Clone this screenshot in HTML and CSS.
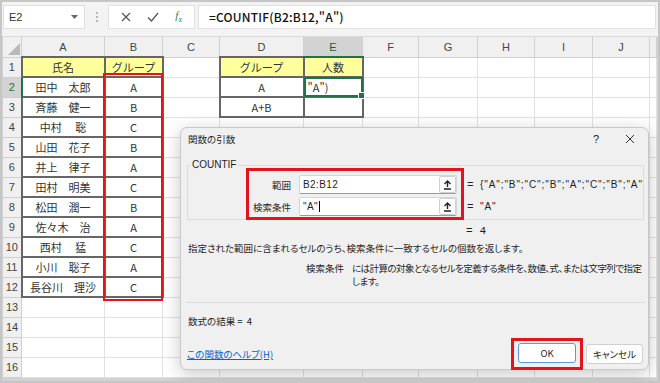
FILE: index.html
```html
<!DOCTYPE html>
<html lang="ja">
<head>
    <meta charset="UTF-8">
    <meta name="viewport" content="width=device-width, initial-scale=1.0">
    <title>COUNTIF 関数の引数</title>
    <link rel="stylesheet" href="styles.css">
</head>
<body>
<div class="window">
    <div class="formula-bar">
        <div class="name-box">
            <span>E2</span>
            <svg class="caret" width="7" height="4" viewBox="0 0 7 4"><path d="M0 0h7L3.5 4z" fill="#666"/></svg>
        </div>
        <div class="grip"><i></i><i></i><i></i></div>
        <div class="fx-box">
            <svg width="10" height="10" viewBox="0 0 10 10"><path d="M1 1l8 8M9 1l-8 8" stroke="#555" stroke-width="1.2"/></svg>
            <svg width="12" height="10" viewBox="0 0 12 10"><path d="M1 5.5l3.5 3.5L11 1" stroke="#555" stroke-width="1.3" fill="none"/></svg>
            <span class="fx">f<sub>x</sub></span>
        </div>
        <div class="formula-input">=COUNTIF(B2:B12,"A")</div>
    </div>

    <table class="sheet">
        <colgroup>
            <col class="c-rh"><col class="c-a"><col class="c-b"><col class="c-c"><col class="c-d"><col class="c-e">
            <col class="c-f"><col class="c-g"><col class="c-h"><col class="c-i"><col class="c-j"><col class="c-k">
        </colgroup>
        <thead>
            <tr>
                <th class="corner"><svg width="12" height="12" viewBox="0 0 12 12"><path d="M12 0v12H0z" fill="#b9b9b9"/></svg></th>
                <th>A</th><th>B</th><th>C</th><th>D</th><th class="active">E</th><th>F</th><th>G</th><th>H</th><th>I</th><th>J</th><th></th>
            </tr>
        </thead>
        <tbody>
            <tr><th>1</th><td class="t hd">氏名</td><td class="t hd">グループ</td><td></td><td class="t hd">グループ</td><td class="t hd">人数</td><td></td><td></td><td></td><td></td><td></td><td></td></tr>
            <tr><th class="active">2</th><td class="t">田中　太郎</td><td class="t">A</td><td></td><td class="t">A</td><td class="t sel">"A")</td><td></td><td></td><td></td><td></td><td></td><td></td></tr>
            <tr><th>3</th><td class="t">斉藤　健一</td><td class="t">B</td><td></td><td class="t">A+B</td><td class="t"></td><td></td><td></td><td></td><td></td><td></td><td></td></tr>
            <tr><th>4</th><td class="t">中村　 聡</td><td class="t">C</td><td></td><td></td><td></td><td></td><td></td><td></td><td></td><td></td><td></td></tr>
            <tr><th>5</th><td class="t">山田　花子</td><td class="t">B</td><td></td><td></td><td></td><td></td><td></td><td></td><td></td><td></td><td></td></tr>
            <tr><th>6</th><td class="t">井上　律子</td><td class="t">A</td><td></td><td></td><td></td><td></td><td></td><td></td><td></td><td></td><td></td></tr>
            <tr><th>7</th><td class="t">田村　明美</td><td class="t">C</td><td></td><td></td><td></td><td></td><td></td><td></td><td></td><td></td><td></td></tr>
            <tr><th>8</th><td class="t">松田　潤一</td><td class="t">B</td><td></td><td></td><td></td><td></td><td></td><td></td><td></td><td></td><td></td></tr>
            <tr><th>9</th><td class="t">佐々木　治</td><td class="t">A</td><td></td><td></td><td></td><td></td><td></td><td></td><td></td><td></td><td></td></tr>
            <tr><th>10</th><td class="t">西村　 猛</td><td class="t">C</td><td></td><td></td><td></td><td></td><td></td><td></td><td></td><td></td><td></td></tr>
            <tr><th>11</th><td class="t">小川　聡子</td><td class="t">A</td><td></td><td></td><td></td><td></td><td></td><td></td><td></td><td></td><td></td></tr>
            <tr><th>12</th><td class="t">長谷川　理沙</td><td class="t">C</td><td></td><td></td><td></td><td></td><td></td><td></td><td></td><td></td><td></td></tr>
            <tr><th>13</th><td></td><td></td><td></td><td></td><td></td><td></td><td></td><td></td><td></td><td></td><td></td></tr>
            <tr><th>14</th><td></td><td></td><td></td><td></td><td></td><td></td><td></td><td></td><td></td><td></td><td></td></tr>
            <tr><th>15</th><td></td><td></td><td></td><td></td><td></td><td></td><td></td><td></td><td></td><td></td><td></td></tr>
            <tr><th>16</th><td></td><td></td><td></td><td></td><td></td><td></td><td></td><td></td><td></td><td></td><td></td></tr>
        </tbody>
    </table>

    <!-- 範囲 B2:B12 の赤枠 -->
    <div class="mark"></div>

    <div class="dialog">
        <div class="dlg-title">
            <span>関数の引数</span>
            <span class="help">?</span>
            <svg class="close" width="10" height="10" viewBox="0 0 10 10"><path d="M1 1l8 8M9 1l-8 8" stroke="#333" stroke-width="1"/></svg>
        </div>

        <fieldset class="group">
            <legend>COUNTIF</legend>
            <div class="args">
                <div class="arg-box">
                    <label>範囲</label>
                    <div class="ref-input"><span>B2:B12</span><button class="ref-btn"><svg width="9" height="10" viewBox="0 0 9 10"><path d="M4.5 1v6M1.5 4l3-3 3 3M1 9h7" stroke="#222" stroke-width="1.4" fill="none"/></svg></button></div>
                    <label>検索条件</label>
                    <div class="ref-input"><span>"A"<b class="cursor"></b></span><button class="ref-btn"><svg width="9" height="10" viewBox="0 0 9 10"><path d="M4.5 1v6M1.5 4l3-3 3 3M1 9h7" stroke="#222" stroke-width="1.4" fill="none"/></svg></button></div>
                </div>
                <div class="vals">
                    <span class="eq">=</span><span class="val">{"A";"B";"C";"B";"A";"C";"B";"A";"C";"A";"C"}</span>
                    <span class="eq">=</span><span class="val">"A"</span>
                </div>
            </div>
        </fieldset>

        <div class="total"><span class="eq">=</span><span>4</span></div>
        <p class="desc">指定された範囲に含まれるセルのうち、検索条件に一致するセルの個数を返します。</p>
        <div class="arg-desc">
            <span class="arg-name">検索条件</span>
            <p>には計算の対象となるセルを定義する条件を、数値、式、または文字列で指定<br>します。</p>
        </div>

        <hr class="sep">
        <div class="result">数式の結果 =&nbsp;&nbsp;4</div>

        <div class="dlg-foot">
            <a href="#" class="help-link">この関数のヘルプ(H)</a>
            <span class="ok-mark"><button class="btn ok">OK</button></span>
            <button class="btn">キャンセル</button>
        </div>
    </div>
</div>
</body>
</html>
```

FILE: styles.css
```css
* {
    box-sizing: border-box;
    margin: 0;
    padding: 0;
}

body {
    background-color: #fff;
    font-family: "Noto Sans CJK JP", sans-serif;
    color: #222;
}

.window {
    position: relative;
    width: 660px;
    height: 383px;
    border: 2px solid #c6c6c6;
    background-color: #d2d2d2;
    overflow: hidden;
}

/* formula bar */

.formula-bar {
    display: flex;
    align-items: flex-start;
    height: 35px;
    padding: 3px 2px 0 1px;
    background-color: #f3f3f3;
    border-bottom: 1px solid #dadada;
}

.name-box {
    display: flex;
    align-items: center;
    justify-content: space-between;
    width: 82px;
    height: 24px;
    padding: 0 6px 0 5px;
    background-color: #fff;
    border: 1px solid #dedede;
    font-family: "Liberation Sans", sans-serif;
    font-size: 11px;
    color: #333;
}

.grip {
    display: flex;
    flex-direction: column;
    gap: 2px;
    width: 23px;
    padding-top: 7px;
    align-items: center;
}

.grip i {
    width: 2px;
    height: 2px;
    background-color: #b8b8b8;
}

.fx-box {
    display: flex;
    align-items: center;
    justify-content: space-around;
    width: 87px;
    height: 24px;
    padding: 0 4px;
    background-color: #fff;
    border: 1px solid #e2e2e2;
}

.fx {
    font-family: "Liberation Serif", serif;
    font-style: italic;
    font-size: 11px;
    color: #2d7d46;
}

.fx sub {
    font-size: 8px;
}

.formula-input {
    flex: 1;
    height: 24px;
    margin-left: 3px;
    padding: 2px 10px;
    background-color: #fff;
    border: 1px solid #e2e2e2;
    font-size: 12px;
    font-weight: 500;
    color: #111;
    letter-spacing: 0.2px;
}

/* sheet */

.sheet {
    border-collapse: collapse;
    table-layout: fixed;
    width: 654px;
    font-size: 11px;
    background-color: #fff;
}

.c-rh { width: 19px; }
.c-a { width: 83px; }
.c-b { width: 58px; }
.c-c { width: 57px; }
.c-d { width: 84px; }
.c-e { width: 59px; }
.c-f { width: 56px; }
.c-g { width: 59px; }
.c-h { width: 57px; }
.c-i { width: 58px; }
.c-j { width: 57px; }
.c-k { width: 7px; }

.sheet td,
.sheet th {
    height: 20px;
    padding: 0;
    border: 1px solid #e1e1e1;
    background-color: #fff;
    text-align: center;
    font-weight: normal;
    white-space: pre;
    overflow: hidden;
    color: #333;
}

.sheet th {
    background-color: #f0f0f0;
    border-color: #d0d0d0;
    font-family: "Liberation Sans", sans-serif;
    font-size: 11px;
    color: #444;
}

.sheet thead th {
    border-top: none;
}

.sheet th.corner {
    text-align: right;
    vertical-align: bottom;
    padding: 0 1px 2px 0;
}

.sheet th.corner svg {
    display: block;
    margin-left: auto;
}

.sheet thead th.active {
    background-color: #d3d3d3;
    border-bottom: 2px solid #217346;
    color: #1d5e38;
}

.sheet tbody th.active {
    background-color: #d3d3d3;
    border-right: 2px solid #217346;
    color: #217346;
}

.sheet td.t {
    border: 2px solid #666;
}

.sheet td.hd {
    background-color: #ffff9c;
}

.sheet td.sel {
    position: relative;
    text-align: left;
    padding-left: 3px;
    outline: 2px solid #217346;
    outline-offset: -2px;
    overflow: visible;
}

.sheet td.sel::after {
    content: "";
    position: absolute;
    right: -3px;
    bottom: -3px;
    width: 5px;
    height: 5px;
    background-color: #217346;
    border: 1px solid #fff;
}

.mark {
    position: absolute;
    left: 101px;
    top: 71px;
    width: 60px;
    height: 228px;
    border: 2px solid #e3141c;
}

/* dialog */

.dialog {
    position: absolute;
    left: 178px;
    top: 125px;
    width: 469px;
    height: 243px;
    display: flex;
    flex-direction: column;
    background-color: #f0f0f0;
    border: 1px solid #c9c9c9;
    border-radius: 7px;
    box-shadow: 0 4px 18px rgba(0, 0, 0, 0.22);
    font-size: 9.5px;
    font-feature-settings: "palt";
    color: #1f1f1f;
}

.dlg-title {
    display: flex;
    align-items: center;
    height: 22px;
    padding: 0 0 0 7px;
}

.dlg-title .help {
    margin-left: auto;
    font-family: "Liberation Sans", sans-serif;
    font-size: 11px;
}

.dlg-title .close {
    margin: 0 13px 0 26px;
}

.group {
    margin: 12px 4px 0 6px;
    height: 58px;
    border: 1px solid #dcdcdc;
    padding: 0;
}

.group legend {
    margin-left: 2px;
    padding: 0 2px;
    line-height: 6px;
    font-family: "Liberation Sans", sans-serif;
    font-size: 10px;
}

.args {
    display: flex;
}

.arg-box {
    display: grid;
    grid-template-columns: 42px 158px;
    grid-auto-rows: 19px;
    column-gap: 8px;
    row-gap: 3px;
    align-items: center;
    width: 218px;
    height: 52px;
    margin-left: 58px;
    padding: 4px 4px 0 0;
    border: 3px solid #e3141c;
}

.arg-box label {
    text-align: right;
}

.ref-input {
    display: flex;
    align-items: center;
    justify-content: space-between;
    height: 19px;
    padding-left: 3px;
    background-color: #fff;
    border: 1px solid #d6d6d6;
    border-bottom-color: #9a9a9a;
    border-radius: 2px;
    font-family: "Liberation Sans", sans-serif;
    font-size: 10px;
    letter-spacing: 0.4px;
}

.cursor {
    display: inline-block;
    width: 1px;
    height: 11px;
    margin-left: 1px;
    vertical-align: -2px;
    background-color: #000;
}

.ref-btn {
    display: flex;
    align-items: center;
    justify-content: center;
    width: 17px;
    height: 17px;
    background-color: #fdfdfd;
    border: 1px solid #d0d0d0;
    border-radius: 2px;
}

.vals {
    display: grid;
    grid-template-columns: 13px 1fr;
    grid-auto-rows: 19px;
    row-gap: 3px;
    align-items: center;
    min-width: 0;
    flex: 1;
    padding: 7px 0 0 3px;
    overflow: hidden;
    font-family: "Liberation Sans", sans-serif;
    font-size: 10px;
}

.val {
    white-space: nowrap;
    overflow: hidden;
    letter-spacing: 0.9px;
}

.eq {
    font-family: "Liberation Mono", monospace;
    font-size: 11px;
}

.total {
    display: flex;
    gap: 7px;
    height: 14px;
    margin-top: 4px;
    padding-left: 285px;
    font-family: "Liberation Mono", monospace;
    font-size: 11px;
    line-height: 14px;
}

.desc {
    margin: 3px 0 0 7px;
    height: 14px;
    line-height: 14px;
}

.arg-desc {
    display: flex;
    margin-top: 7px;
    line-height: 13px;
}

.arg-name {
    width: 163px;
    text-align: right;
    flex-shrink: 0;
}

.arg-desc p {
    margin-left: 8px;
    width: 294px;
    white-space: nowrap;
    letter-spacing: -0.55px;
}

.sep {
    margin: 14px 3px 0 5px;
    border: none;
    border-top: 1px solid #dcdcdc;
}

.result {
    margin: 11px 0 0 7px;
    line-height: 14px;
}

.dlg-foot {
    display: flex;
    align-items: center;
    height: 32px;
    margin-top: auto;
    margin-bottom: -1px;
}

.help-link {
    margin-left: 6px;
    color: #0a64c8;
    text-decoration: underline;
}

.ok-mark {
    display: flex;
    margin-left: auto;
    padding: 2px 4px 4px 4px;
    border: 3px solid #e3141c;
}

.btn {
    width: 58px;
    height: 20px;
    background-color: #fdfdfd;
    border: 1px solid #d0d0d0;
    border-radius: 3px;
    font-family: "Noto Sans CJK JP", sans-serif;
    font-size: 9.5px;
    font-feature-settings: "palt";
    color: #1f1f1f;
}

.btn.ok {
    background-color: #fff;
    border-color: #5b9bd8;
}

.dlg-foot > .btn {
    width: 57px;
    margin: 0 5px 0 3px;
}
```
